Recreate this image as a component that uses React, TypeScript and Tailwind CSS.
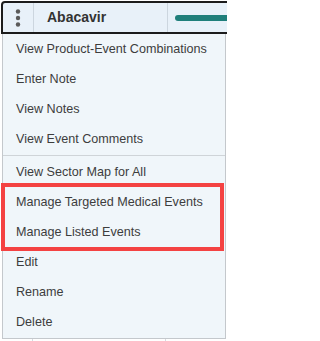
import React from "react";

const groups: string[][] = [
  ["View Product-Event Combinations", "Enter Note", "View Notes", "View Event Comments"],
  [
    "View Sector Map for All",
    "Manage Targeted Medical Events",
    "Manage Listed Events",
    "Edit",
    "Rename",
    "Delete",
  ],
];

function KebabIcon() {
  return (
    <svg width="6" height="18" viewBox="0 0 6 18" className="block">
      <circle cx="3" cy="2.5" r="2.2" fill="#5a5a5a" />
      <circle cx="3" cy="9" r="2.2" fill="#5a5a5a" />
      <circle cx="3" cy="15.5" r="2.2" fill="#5a5a5a" />
    </svg>
  );
}

export default function App() {
  return (
    <div
      className="relative w-[227px] h-[341px] overflow-hidden bg-white"
      style={{ fontFamily: '"Liberation Sans", Arial, sans-serif' }}
    >
      {/* Row header */}
      <div className="ml-[1px] mt-[1px] w-[250px] h-[33px] flex border-2 border-[#1c1c1c] rounded-tl-[4px] bg-[#e8f1f9]">
        <div className="w-[31px] flex items-center justify-center border-r border-[#ccd6df]">
          <KebabIcon />
        </div>
        <div className="w-[133px] flex items-center pl-[13px] text-[14px] font-bold text-[#333]">
          Abacavir
        </div>
        <div className="flex-1 flex items-center pl-[7px] border-l border-[#ccd6df]">
          <div className="w-full h-[6px] rounded-full bg-[#1f7f7b]" />
        </div>
      </div>

      {/* Context menu */}
      <div className="ml-[2px] w-[224px] border border-t-0 border-[#c4c8cc] bg-[#f0f6fa] pb-[1px]">
        {groups.map((items, gi) => (
          <div key={gi} className={gi > 0 ? "border-t border-[#cfd4d8] mt-[1px] pt-[1px]" : ""}>
            {items.map((label) => (
              <div
                key={label}
                className="h-[30px] flex items-center pl-[13px] text-[12.6px] text-[#3d3d3d] whitespace-nowrap"
              >
                {label}
              </div>
            ))}
          </div>
        ))}
      </div>

      {/* Table column lines beneath */}
      <div className="flex h-[4px]">
        <div className="w-[33px] border-r border-[#d6dbe0]" />
        <div className="w-[133px] border-r border-[#d6dbe0]" />
      </div>

      {/* Annotation highlight */}
      <div className="absolute left-[1px] top-[183px] w-[223px] h-[68px] border-4 border-[#f44242]" />
    </div>
  );
}
